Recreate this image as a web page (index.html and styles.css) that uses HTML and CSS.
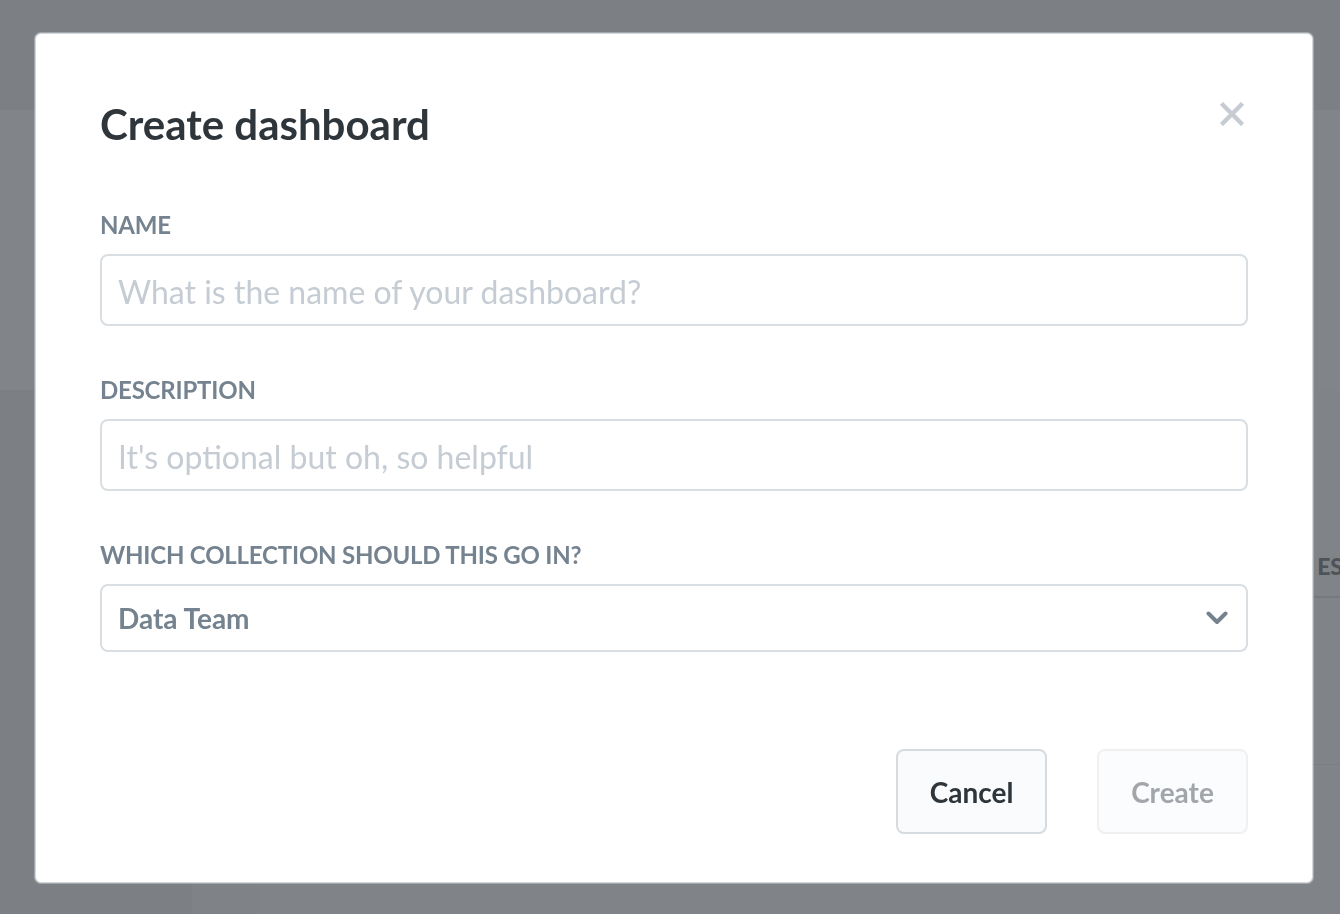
FILE: index.html
```html
<!DOCTYPE html>
<html>
<head>
<meta charset="utf-8">
<link rel="stylesheet" href="styles.css">
</head>
<body>
<div class="app">
  <div class="app-top"></div>
  <div class="app-band"></div>
  <div class="app-main">
    <div class="app-side"></div>
    <div class="app-side2"></div>
    <div class="app-content">
      <div class="app-row"></div>
      <div class="app-head"><span class="app-head-text">ES</span></div>
      <div class="app-row2"></div>
    </div>
  </div>
</div>
<div class="overlay">
  <div class="modal">
    <div class="modal-header">
      <h2 class="modal-title">Create dashboard</h2>
      <button class="close" aria-label="Close">
        <svg width="24" height="24" viewBox="0 0 24 24"><path d="M3 3 L21 21 M21 3 L3 21" stroke="#c6ccd2" stroke-width="4.4" stroke-linecap="square" fill="none"/></svg>
      </button>
    </div>
    <div class="field">
      <label class="label">NAME</label>
      <div class="input"><span class="placeholder">What is the name of your dashboard?</span></div>
    </div>
    <div class="field">
      <label class="label">DESCRIPTION</label>
      <div class="input"><span class="placeholder">It's optional but oh, so helpful</span></div>
    </div>
    <div class="field">
      <label class="label">WHICH COLLECTION SHOULD THIS GO IN?</label>
      <div class="select"><span class="select-value">Data Team</span>
        <svg class="chevron" width="22" height="14" viewBox="0 0 22 14"><path d="M2.5 2.5 L11 11 L19.5 2.5" stroke="#74838f" stroke-width="4" fill="none" stroke-linecap="round" stroke-linejoin="round"/></svg>
      </div>
    </div>
    <div class="footer">
      <button class="btn btn-cancel">Cancel</button>
      <button class="btn btn-create">Create</button>
    </div>
  </div>
</div>
</body>
</html>
```
FILE: styles.css
```css
html, body {
  margin: 0;
  padding: 0;
  width: 1340px;
  height: 914px;
  overflow: hidden;
  background: #7f8387;
  font-family: Lato, "Noto Sans", sans-serif;
}
.app {
  width: 1340px;
  height: 914px;
  display: flex;
  flex-direction: column;
  background: #808488;
}
.app-top {
  height: 110px;
  background: #7c8084;
}
.app-band {
  height: 280px;
  background: #818589;
}
.app-main {
  flex: 1;
  display: flex;
}
.app-side {
  width: 192px;
  background: #7c8085;
}
.app-side2 {
  width: 66px;
  background: #7f8387;
}
.app-content {
  flex: 1;
  display: flex;
  flex-direction: column;
}
.app-row {
  height: 145px;
}
.app-head {
  height: 61px;
  border-bottom: 2px solid #76797e;
  display: flex;
  justify-content: flex-end;
  align-items: center;
}
.app-head-text {
  color: #4e5358;
  font-weight: 900;
  font-size: 23px;
  margin-right: -3px;
}
.app-row2 {
  height: 166px;
  border-bottom: 1px solid #7a7e83;
}
.overlay {
  position: fixed;
  inset: 0;
  padding: 33px 27px 31px 35px;
  display: flex;
}
.modal {
  flex: 1;
  background: #fff;
  border: 1px solid #d3d7da;
  border-radius: 6px;
  box-shadow: 0 0 0 1px rgba(200,205,210,0.5);
  padding: 63px 64px 48px 64px;
  display: flex;
  flex-direction: column;
}
.modal-header {
  display: flex;
  justify-content: space-between;
  align-items: flex-start;
  margin-bottom: 60px;
}
.modal-title {
  margin: 0;
  font-size: 42px;
  line-height: 1.3;
  font-weight: 700;
  color: #2e353b;
}
.close {
  border: 0;
  background: none;
  padding: 0;
  margin-top: 5px;
  margin-right: 4px;
  width: 24px;
  height: 24px;
}
.field {
  display: flex;
  flex-direction: column;
  margin-bottom: 51px;
}
.label {
  font-size: 24px;
  letter-spacing: -0.2px;
  font-weight: 700;
  color: #74838f;
  line-height: 26px;
  margin-bottom: 16px;
}
.input, .select {
  box-sizing: border-box;
  border: 2px solid #d9dee2;
  border-radius: 8px;
  height: 72px;
  display: flex;
  align-items: center;
  padding: 0 16px;
}
.placeholder {
  font-size: 32px;
  color: #c5ccd3;
  padding-top: 4px;
}
.select {
  height: 68px;
  justify-content: space-between;
  padding-right: 18px;
}
.select-value {
  font-size: 28px;
  font-weight: 700;
  color: #74838f;
}
.footer {
  margin-top: auto;
  display: flex;
  justify-content: flex-end;
  gap: 50px;
}
.btn {
  width: 151px;
  height: 85px;
  border-radius: 8px;
  font-family: Lato, "Noto Sans", sans-serif;
  font-size: 28px;
  font-weight: 700;
}
.btn-cancel {
  background: #f9fbfc;
  border: 2px solid #d6dbdf;
  color: #2e353b;
}
.btn-create {
  background: #fbfcfd;
  border: 2px solid #eef0f2;
  color: #a2a6aa;
}
```
